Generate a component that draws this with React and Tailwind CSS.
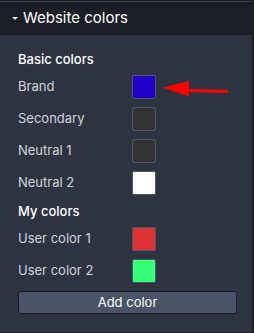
import React from 'react';

const basic = [
  { name: 'Brand', color: 'bg-[#2200cc]' },
  { name: 'Secondary', color: 'bg-[#333333]' },
  { name: 'Neutral 1', color: 'bg-[#333333]' },
  { name: 'Neutral 2', color: 'bg-white' },
];

const mine = [
  { name: 'User color 1', color: 'bg-[#dd3333]' },
  { name: 'User color 2', color: 'bg-[#33ff77]' },
];

const ColorRow = ({ name, color, children }) => (
  <div className="relative flex h-6 items-center">
    <span className="w-[114px] text-[13px] text-[#cfd3db]">{name}</span>
    <div className={`h-6 w-6 rounded-[2px] border border-[#4f5566] ${color}`} />
    {children}
  </div>
);

const App = () => {
  return (
    <div className="h-[333px] w-[254px] bg-[#1b1e27] pt-px font-['Inter',sans-serif] text-white">
      <div className="h-[331px] w-[252px] border-t border-[#3b404c]">
        {/* Header */}
        <div className="flex h-[33px] items-center pl-[12px]">
          <svg width="6" height="3" viewBox="0 0 6 3" className="mr-[5px]">
            <path d="M0 0h6L3 3z" fill="#e5e7eb" />
          </svg>
          <span className="text-[15px] text-white">Website colors</span>
        </div>

        {/* Content */}
        <div className="flex h-[297px] flex-col bg-[#2e3341] px-[18px] pt-[14px]">
          <div className="mb-[6px] h-5 text-[13px] font-medium leading-5">Basic colors</div>
          <div className="flex flex-col gap-2">
            {basic.map((c, i) => (
              <ColorRow key={c.name} {...c}>
                {i === 0 && (
                  <svg
                    width="66"
                    height="16"
                    viewBox="0 0 66 16"
                    className="absolute left-[145px] top-[6px]"
                  >
                    <path d="M0 6.5L26 0V8L65 9V12L26 11V15.5Z" fill="#ff0000" />
                  </svg>
                )}
              </ColorRow>
            ))}
          </div>
          <div className="my-[6px] h-5 text-[13px] font-medium leading-5">My colors</div>
          <div className="flex flex-col gap-2">
            {mine.map((c) => (
              <ColorRow key={c.name} {...c} />
            ))}
          </div>
          <button className="mt-2 h-[23px] w-[219px] rounded-[3px] border border-[#1a1d25] bg-[#4a5468] text-[13px] text-white">
            Add color
          </button>
        </div>
      </div>
    </div>
  );
};

export default App;
